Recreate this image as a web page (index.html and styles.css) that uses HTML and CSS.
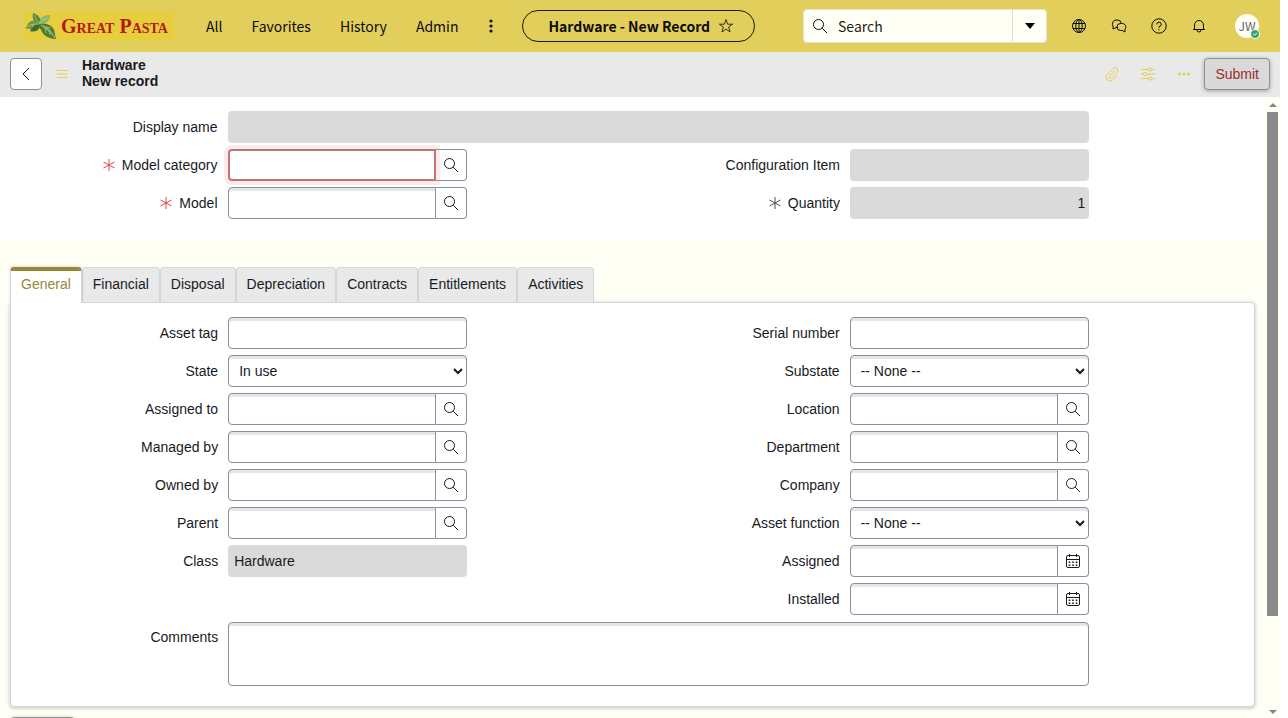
FILE: index.html
```html
<!DOCTYPE html>
<html lang="en">
<head>
<meta charset="utf-8">
<title>Hardware - New Record</title>
<link rel="stylesheet" href="styles.css">
</head>
<body>
<svg class="sprite" aria-hidden="true">
  <symbol id="search" viewBox="0 0 16 16"><circle cx="6.500" cy="6.500" r="5"/><path d="M10.200 10.200 15 15"/></symbol>
  <symbol id="calendar" viewBox="0 0 16 16"><rect x="1.500" y="2.500" width="13" height="12" rx="1.500"/><path d="M1.500 6.500h13M4.500 1v3M11.500 1v3"/><path class="dots" d="M7.200 9.200h1.600M10.700 9.200h1.600M3.700 12.200h1.600M7.200 12.200h1.600M10.700 12.200h1.600M3.700 9.200h1.600"/></symbol>
  <symbol id="star6" viewBox="0 0 12 12"><path d="M6 0v12M.5 3l11 6M.5 9l11-6"/></symbol>
</svg>
<header class="banner">
  <a class="logo" href="#" aria-label="Great Pasta">
    <svg class="leaf" viewBox="0 0 33 28" aria-hidden="true">
      <path fill="#5d8a3a" d="M16 12C9 11 8 6 9 1C14 3 18 6 16 12Z"/>
      <path fill="#8fb368" d="M15 11C16 5 20 3 26 3C26 9 22 13 15 11Z"/>
      <path fill="#6c9a45" d="M1 16C4 14 3 10 8 9C12 8 14 10 16 12C12 17 7 18 1 16Z"/>
      <path fill="#3f6f2b" d="M16 12C17 17 12 21 6 19C8 15 11 12 16 12Z"/>
      <path fill="#4b7a34" d="M15 12C22 10 29 14 30 18C31 21 31 24 32 27C26 27 20 24 18 20C17 17 15 16 15 12Z"/>
      <path fill="#7fa558" d="M17 13C23 13 29 19 31 26C27 20 22 18 17 13Z"/>
      <path fill="none" stroke="#c3d79a" stroke-width=".6" d="M3 15Q8 11 15 12M10 3Q12 9 16 12M24 5Q19 7 16 11M17 13Q25 17 31 26M21 16l1 5M25 19l1 4M22 15l5 1M8 12l1 3M19 7l3 1"/>
    </svg>
    <span class="wordmark">Great Pasta</span>
  </a>
  <nav class="menu">
    <a href="#">All</a><a href="#">Favorites</a><a href="#">History</a><a href="#">Admin</a>
    <button class="plain" aria-label="More menus"><svg class="dotmenu" viewBox="0 0 16 16"><circle cx="8" cy="3" r="1.600"/><circle cx="8" cy="8" r="1.600"/><circle cx="8" cy="13" r="1.600"/></svg></button>
  </nav>
  <button class="pill">Hardware - New Record
    <svg class="ic thin" viewBox="0 0 16 16"><path d="m8 1.500 1.600 4.700h5L10.600 9.100l1.500 4.900L8 11.100 3.900 14l1.500-4.900-4-2.900h5z"/></svg>
  </button>
  <div class="finder">
    <svg class="ic" aria-hidden="true"><use href="#search"/></svg>
    <input type="text" placeholder="Search" aria-label="Search">
    <button aria-label="Choose search context"><svg viewBox="0 0 12 8" width="12" height="8"><path d="M1 1h10L6 7z" fill="#000"/></svg></button>
  </div>
  <div class="tools">
    <button class="plain" aria-label="Scope"><svg class="ic" viewBox="0 0 16 16"><circle cx="8" cy="8" r="6.500"/><ellipse cx="8" cy="8" rx="3.200" ry="6.500"/><path d="M2 5.500h12M2 10.500h12M8 1.500v13"/></svg></button>
    <button class="plain" aria-label="Conversations"><svg class="ic" viewBox="0 0 16 16"><path d="M7 9.500H5L2 11V8.200A4 4 0 0 1 5 2h1.500A3.700 3.700 0 0 1 10.200 5.500"/><path d="M9.500 5.500h2A3.500 3.500 0 0 1 14 11.300V14L11.500 12.500h-2A3.500 3.500 0 0 1 9.500 5.500"/></svg></button>
    <button class="plain" aria-label="Help"><svg class="ic" viewBox="0 0 16 16"><circle cx="8" cy="8" r="7.200"/><path d="M5.800 6.400A2.200 2.200 0 1 1 8 8.500v1.300M8 11v1.300"/></svg></button>
    <button class="plain" aria-label="Notifications"><svg class="ic" viewBox="0 0 16 16"><path d="M2 11.500h12M3.500 11.500V7a4.500 4.500 0 0 1 9 0v4.500M6 12a2 2 0 0 0 4 0"/></svg></button>
    <button class="plain avatar" aria-label="User menu">JW<svg class="presence" viewBox="0 0 10 10"><circle cx="5" cy="5" r="4.500" fill="#36a668" stroke="#fff"/><path d="m3.200 5 1.300 1.300L7 3.800" fill="none" stroke="#fff"/></svg></button>
  </div>
</header>

<div class="titlebar">
  <button class="back" aria-label="Back"><svg class="ic" viewBox="0 0 16 16"><path d="M11 2 5 8l6 6"/></svg></button>
  <button class="plain gold" aria-label="Additional actions"><svg class="ic" viewBox="0 0 16 16"><path d="M2.500 4.500h11M2.500 8h11M2.500 11.500h11"/></svg></button>
  <h1>Hardware<br>New record</h1>
  <div class="actions gold">
    <button class="plain" aria-label="Attachments"><svg class="ic" viewBox="0 0 16 16"><path d="M11 4.500 5.800 9.900a1.300 1.300 0 0 0 1.900 1.900l5.300-5.600a2.700 2.700 0 0 0-4-3.800L3.200 8.300a4 4 0 0 0 5.600 5.700L13 9.700"/></svg></button>
    <button class="plain" aria-label="Personalize form"><svg class="ic" viewBox="0 0 16 16"><path d="M1 3.500h7M12 3.500h3M1 8h2M7 8h8M1 12.500h7M12 12.500h3"/><circle cx="10" cy="3.500" r="1.700"/><circle cx="5" cy="8" r="1.700"/><circle cx="10" cy="12.500" r="1.700"/></svg></button>
    <button class="plain" aria-label="More options"><svg class="ic" viewBox="0 0 16 16"><g class="solid"><circle cx="3.500" cy="8" r="1.600"/><circle cx="8" cy="8" r="1.600"/><circle cx="12.500" cy="8" r="1.600"/></g></svg></button>
  </div>
  <button class="submit">Submit</button>
</div>

<div class="viewport">
<main>
  <section class="summary">
    <div class="row full"><label for="dn">Display name</label><div class="field"><input id="dn" readonly></div></div>
    <div class="halves">
      <div class="stack">
        <div class="row"><label for="mc"><svg class="req red"><use href="#star6"/></svg>Model category</label><div class="field"><input id="mc" class="focus"><button aria-label="Look up model category"><svg class="ic"><use href="#search"/></svg></button></div></div>
        <div class="row"><label for="mo"><svg class="req red"><use href="#star6"/></svg>Model</label><div class="field"><input id="mo"><button aria-label="Look up model"><svg class="ic"><use href="#search"/></svg></button></div></div>
      </div>
      <div class="stack">
        <div class="row"><label for="ci">Configuration Item</label><div class="field"><input id="ci" readonly></div></div>
        <div class="row"><label for="qt"><svg class="req"><use href="#star6"/></svg>Quantity</label><div class="field"><input id="qt" class="number" value="1" readonly></div></div>
      </div>
    </div>
  </section>

  <div class="tabs" role="tablist">
    <button role="tab" aria-selected="true">General</button><button role="tab">Financial</button><button role="tab">Disposal</button><button role="tab">Depreciation</button><button role="tab">Contracts</button><button role="tab">Entitlements</button><button role="tab">Activities</button>
  </div>
  <section class="panel">
    <div class="halves">
      <div class="stack">
        <div class="row"><label for="at">Asset tag</label><div class="field"><input id="at"></div></div>
        <div class="row"><label for="st">State</label><div class="field"><select id="st"><option>In use</option></select></div></div>
        <div class="row"><label for="as">Assigned to</label><div class="field"><input id="as"><button aria-label="Look up assigned to"><svg class="ic"><use href="#search"/></svg></button></div></div>
        <div class="row"><label for="mb">Managed by</label><div class="field"><input id="mb"><button aria-label="Look up managed by"><svg class="ic"><use href="#search"/></svg></button></div></div>
        <div class="row"><label for="ob">Owned by</label><div class="field"><input id="ob"><button aria-label="Look up owned by"><svg class="ic"><use href="#search"/></svg></button></div></div>
        <div class="row"><label for="pa">Parent</label><div class="field"><input id="pa"><button aria-label="Look up parent"><svg class="ic"><use href="#search"/></svg></button></div></div>
        <div class="row"><label for="cl">Class</label><div class="field"><input id="cl" value="Hardware" readonly></div></div>
      </div>
      <div class="stack">
        <div class="row"><label for="sn">Serial number</label><div class="field"><input id="sn"></div></div>
        <div class="row"><label for="ss">Substate</label><div class="field"><select id="ss"><option>-- None --</option></select></div></div>
        <div class="row"><label for="lo">Location</label><div class="field"><input id="lo"><button aria-label="Look up location"><svg class="ic"><use href="#search"/></svg></button></div></div>
        <div class="row"><label for="de">Department</label><div class="field"><input id="de"><button aria-label="Look up department"><svg class="ic"><use href="#search"/></svg></button></div></div>
        <div class="row"><label for="co">Company</label><div class="field"><input id="co"><button aria-label="Look up company"><svg class="ic"><use href="#search"/></svg></button></div></div>
        <div class="row"><label for="af">Asset function</label><div class="field"><select id="af"><option>-- None --</option></select></div></div>
        <div class="row"><label for="ad">Assigned</label><div class="field"><input id="ad"><button aria-label="Pick assigned date"><svg class="ic"><use href="#calendar"/></svg></button></div></div>
        <div class="row"><label for="in">Installed</label><div class="field"><input id="in"><button aria-label="Pick installed date"><svg class="ic"><use href="#calendar"/></svg></button></div></div>
      </div>
    </div>
    <div class="row full"><label for="cm">Comments</label><div class="field"><textarea id="cm"></textarea></div></div>
  </section>
  <div class="footer"><button class="submit" aria-label="Submit form"></button></div>
</main>
<div class="scrollbar" aria-hidden="true"><i class="up"></i><div class="track"><div class="thumb"></div></div><i class="down"></i></div>
</div>
</body>
</html>
```
FILE: styles.css
```css
* { box-sizing: border-box; }
body {
  margin: 0;
  padding-right: 8px;
  height: 100vh;
  display: flex;
  flex-direction: column;
  overflow: hidden;
  background: #fff;
  color: #181a1f;
  font: 14px/20px "Liberation Sans", Arial, sans-serif;
}
button, input, select, textarea { font: inherit; color: inherit; margin: 0; }
.sprite { display: none; }
.ic {
  width: 16px;
  height: 16px;
  flex: none;
  display: block;
  fill: none;
  stroke: currentColor;
  stroke-width: 1;
}
.solid { fill: currentColor; stroke: none; }
.dots { stroke-width: 1.6; }
.thin { stroke-width: 0.8; }
.dotmenu { width: 16px; height: 16px; display: block; fill: #111; }
.plain { border: 0; padding: 0; background: none; display: block; }

.banner {
  flex: none;
  height: 52px;
  display: flex;
  align-items: center;
  padding: 0 21px 0 24px;
  background: #e2cf5b;
  color: #0c0c0a;
  font: 14px/24px "Noto Sans CJK SC", "Noto Sans", sans-serif;
}
.logo {
  width: 150px;
  height: 28px;
  flex: none;
  display: flex;
  align-items: center;
  gap: 4px;
  background: #e7ce3c;
  color: #b31919;
  text-decoration: none;
}
.leaf { width: 33px; height: 28px; flex: none; }
.wordmark {
  font: bold 20px/28px "Liberation Serif", serif;
  font-variant: small-caps;
  white-space: nowrap;
}
.menu { display: flex; align-items: center; gap: 29px; margin-left: 32px; }
.menu a { color: inherit; text-decoration: none; }
.menu button { margin-left: -4px; }
.pill {
  display: flex;
  align-items: center;
  gap: 8px;
  height: 32px;
  margin-left: 23px;
  padding: 0 20px 0 25px;
  border: 1px solid #1a1a10;
  border-radius: 16px;
  background: none;
  font-weight: bold;
  white-space: nowrap;
}
.finder {
  display: flex;
  align-items: center;
  width: 244px;
  height: 34px;
  margin-left: auto;
  padding-left: 8px;
  border: 1px solid #e2e2d8;
  border-radius: 4px;
  background: #fffff6;
}
.finder input {
  flex: 1;
  min-width: 0;
  padding: 0 10px;
  border: 0;
  background: none;
  outline: 0;
}
.finder input::placeholder { color: #1c1d1b; opacity: 1; }
.finder button {
  display: grid;
  place-items: center;
  width: 34px;
  height: 32px;
  padding: 0;
  border: 0;
  border-left: 1px solid #dcdcd4;
  background: none;
}
.tools { display: flex; align-items: center; gap: 24px; margin-left: 24px; }
.avatar {
  position: relative;
  width: 24px;
  height: 24px;
  margin-left: 4px;
  border-radius: 50%;
  background: #fffff6;
  color: #5c6270;
  font: 12px/24px "Noto Sans CJK SC", sans-serif;
}
.presence { position: absolute; right: -1px; bottom: -1px; width: 10px; height: 10px; }

.titlebar {
  flex: none;
  height: 45px;
  display: flex;
  align-items: center;
  padding: 0 10px 1px;
  background: #e9e9e9;
}
.back {
  display: grid;
  place-items: center;
  width: 32px;
  height: 32px;
  margin-right: 12px;
  padding: 0;
  border: 1px solid #909090;
  border-radius: 4px;
  background: #fff;
}
.gold { color: #e4ce57; }
.titlebar h1 { margin: 0 0 2px 12px; font-size: 14px; line-height: 16px; }
.actions { display: flex; gap: 20px; margin-left: auto; margin-right: 12px; }
.submit {
  min-width: 65px;
  height: 32px;
  padding: 0 10px;
  border: 1px solid #909090;
  border-radius: 4px;
  background: #d9d9d9;
  color: #9e2b2b;
  box-shadow: 0 1px 4px rgba(0, 0, 0, 0.3);
}

.viewport { flex: 1; min-height: 0; display: flex; background: #fffff6; }
main { flex: 1; min-width: 0; overflow: hidden; }
.summary { padding: 14px 10px 20px; background: #fff; }
.halves { display: grid; grid-template-columns: 1fr 1fr; }
.stack { display: flex; flex-direction: column; gap: 6px; }
.row { display: grid; grid-template-columns: minmax(0, 4fr) minmax(0, 5fr) minmax(0, 3fr); }
.full { grid-template-columns: minmax(0, 4fr) minmax(0, 17fr) minmax(0, 3fr); }
.summary .full { margin-bottom: 6px; }
.panel .full { margin-top: 7px; }
.row label {
  display: flex;
  align-items: center;
  justify-content: flex-end;
  height: 32px;
  white-space: nowrap;
}
.panel .full label { height: 30px; }
.req { width: 12px; height: 12px; margin-right: 7px; stroke: #50535a; fill: none; }
.red { stroke: #dc4a4a; }
.field { display: flex; padding: 0 10px; }
.field input, .field select, .field textarea {
  flex: 1;
  min-width: 0;
  height: 32px;
  padding: 0 6px;
  border: 1px solid #8b8e9d;
  border-radius: 4px;
  background: #fff;
  box-shadow: inset 0 3px 0 #e6e6e6;
  outline: 0;
}
.field textarea { height: 64px; resize: none; display: block; }
.field input[readonly] { border: 0; background: #dadada; box-shadow: none; }
.field .number { text-align: right; padding-right: 4px; }
.field input:not(:last-child) { border-radius: 4px 0 0 4px; }
.field input.focus {
  border: 2px solid #c57474;
  box-shadow: 0 0 0 4px #f9ecee;
}
.field button {
  display: grid;
  place-items: center;
  width: 31px;
  height: 32px;
  padding: 0;
  border: 1px solid #8b8e9d;
  border-left: 0;
  border-radius: 0 4px 4px 0;
  background: none;
}

.tabs { display: flex; padding: 28px 10px 0; }
.tabs button {
  height: 35px;
  padding: 0 10px 2px;
  border: 1px solid #d3d6dc;
  border-bottom: 0;
  border-radius: 4px 4px 0 0;
  background: #e9e9e9;
}
.tabs [aria-selected] {
  height: 36px;
  margin-bottom: -1px;
  border-top: 4px solid #968739;
  padding-bottom: 6px;
  background: #fff;
  color: #968739;
  position: relative;
  box-shadow: 0 -1px 3px rgba(0, 0, 0, 0.12);
  clip-path: inset(-4px -4px 0 -4px);
}
.panel {
  margin: 0 10px;
  padding: 14px 0 20px;
  border: 1px solid #d3d6dc;
  border-radius: 0 4px 4px 4px;
  background: #fff;
  box-shadow: 0 1px 4px rgba(0, 0, 0, 0.25);
}
.footer { padding: 10px; }

.scrollbar {
  width: 15px;
  flex: none;
  display: flex;
  flex-direction: column;
  align-items: center;
  gap: 5px;
  padding: 6px 2px 4px;
}
.scrollbar i { border: 4px solid transparent; }
.scrollbar .up { border-top: 0; border-bottom-color: #858585; }
.scrollbar .down { border-bottom: 0; border-top-color: #858585; }
.track { flex: 1; align-self: stretch; }
.thumb { height: 85%; background: #8a8a8a; }
```
